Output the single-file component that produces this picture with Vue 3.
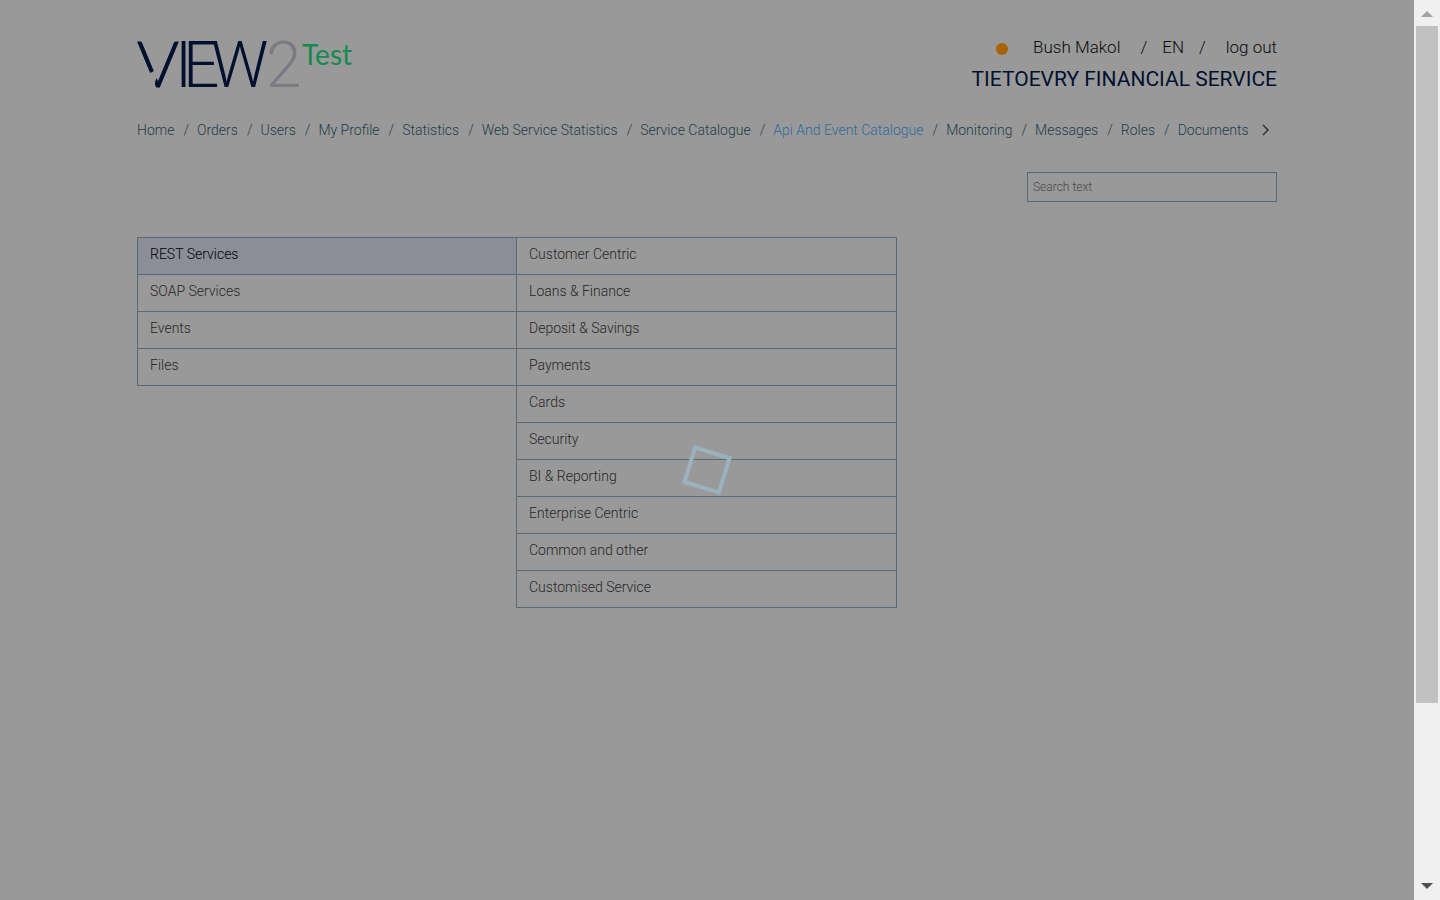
<script setup>
import { ref } from 'vue'

const search = ref('')
const current = 'Api And Event Catalogue'
const links = [
  'Home', 'Orders', 'Users', 'My Profile', 'Statistics', 'Web Service Statistics',
  'Service Catalogue', 'Api And Event Catalogue', 'Monitoring', 'Messages', 'Roles', 'Documents',
]
const kinds = ['REST Services', 'SOAP Services', 'Events', 'Files']
const domains = [
  'Customer Centric', 'Loans & Finance', 'Deposit & Savings', 'Payments', 'Cards', 'Security',
  'BI & Reporting', 'Enterprise Centric', 'Common and other', 'Customised Service',
]
</script>

<template>
  <div class="shell">
    <div class="page">
      <div class="container">
        <header class="header">
          <a class="logo" href="#" aria-label="VIEW2 Test">
            <svg width="220" height="60" viewBox="0 0 220 60">
              <text class="logo-view" x="0 38 46 74" y="51"><tspan class="logo-v">V</tspan>IEW</text>
              <text class="logo-two" x="129" y="51">2</text>
              <text class="logo-test" x="165" y="29">Test</text>
              <path class="logo-cut" d="M9 39 L21 33 L21 39 L18 46 L18 53 L9 53 Z" />
            </svg>
          </a>
          <div class="account">
            <div class="user">
              <span class="status"></span>
              <a class="name" href="#">Bush Makol</a>
              <span class="slash">/</span>
              <a class="lang" href="#">EN</a>
              <span class="slash">/</span>
              <a class="logout" href="#">log out</a>
            </div>
            <div class="company">TIETOEVRY FINANCIAL SERVICE</div>
          </div>
        </header>

        <div class="navbar">
          <nav class="nav">
            <template v-for="(link, i) in links" :key="link">
              <span v-if="i" class="divider">/</span>
              <a href="#" :class="{ active: link === current }">{{ link }}</a>
            </template>
          </nav>
          <button class="next" type="button" aria-label="More">
            <svg width="8" height="12" viewBox="0 0 8 12"><path d="M1 1 L6 6 L1 11" /></svg>
          </button>
        </div>

        <div class="search">
          <input v-model="search" type="text" placeholder="Search text" aria-label="Search text" />
        </div>

        <main class="catalogue">
          <ul class="list">
            <li v-for="(kind, i) in kinds" :key="kind"><a href="#" :class="{ selected: i === 0 }">{{ kind }}</a></li>
          </ul>
          <ul class="list second">
            <li v-for="domain in domains" :key="domain"><a href="#">{{ domain }}</a></li>
          </ul>
        </main>
      </div>
      <div class="spinner" role="status" aria-label="Loading"></div>
    </div>

    <div class="scrollbar" aria-hidden="true">
      <svg width="12" height="6" viewBox="0 0 12 6"><path fill="#a3a3a3" d="M0 6 L6 0 L12 6 Z" /></svg>
      <div class="track"><div class="thumb"></div></div>
      <svg width="12" height="6" viewBox="0 0 12 6"><path fill="#505050" d="M0 0 L12 0 L6 6 Z" /></svg>
    </div>
  </div>
</template>

<style>
body {
  margin: 0;
  background: #999;
}
</style>

<style scoped>
.shell {
  display: flex;
  min-height: 100vh;
  font-family: Roboto, "Liberation Sans", sans-serif;
  font-size: 14px;
  font-weight: 300;
  line-height: 20px;
  color: #262626;
}
.page {
  position: relative;
  flex: 1;
  min-width: 0;
  background: #999;
}
.container {
  max-width: 1140px;
  margin: 0 auto;
}
a {
  color: inherit;
  text-decoration: none;
}
.header {
  display: flex;
  justify-content: space-between;
  padding-top: 36px;
}
.logo svg {
  display: block;
  overflow: visible;
}
.logo .logo-view {
  font-size: 64px;
  fill: #00102e;
}
.logo .logo-v {
  font-family: Lato, sans-serif;
  stroke: #00102e;
  stroke-width: 1;
}
.logo .logo-two {
  font-size: 64px;
  fill: #7b7b85;
}
.logo .logo-test {
  font-family: Lato, sans-serif;
  font-size: 28px;
  font-weight: 400;
  fill: #158a50;
}
.logo-cut {
  fill: #999;
}
.account {
  color: #0a0a0c;
}
.user {
  display: flex;
  align-items: center;
  justify-content: flex-end;
  font-size: 17px;
  line-height: 22px;
}
.status {
  width: 12px;
  height: 12px;
  margin: 3px 25px 0 0;
  border-radius: 50%;
  background: #a86400;
}
.name {
  margin-right: 20px;
}
.lang {
  margin: 0 15px;
}
.logout {
  margin-left: 20px;
}
.company {
  margin-top: 7px;
  font-size: 21px;
  font-weight: 400;
  line-height: 28px;
  text-align: right;
  color: #00102e;
}
.navbar {
  display: flex;
  align-items: center;
  justify-content: space-between;
  margin-top: 24px;
  color: #1f3b4a;
}
.nav {
  display: flex;
  flex: 1;
  overflow: hidden;
  white-space: nowrap;
}
.divider {
  margin: 0 8px 0 9px;
}
.active {
  color: #2d6b99;
}
.next {
  display: flex;
  margin: 0 7px 0 14px;
  padding: 0;
  border: 0;
  background: none;
}
.next path {
  fill: none;
  stroke: #262626;
  stroke-width: 1.3;
}
.search {
  display: flex;
  justify-content: flex-end;
  margin-top: 32px;
}
.search input {
  box-sizing: border-box;
  width: 250px;
  height: 30px;
  padding: 0 5px;
  border: 1px solid #566b77;
  border-radius: 0;
  background: transparent;
  font: inherit;
  font-size: 12px;
}
.search input::placeholder {
  color: #484848;
  opacity: 1;
}
.catalogue {
  display: grid;
  grid-template-columns: repeat(3, 1fr);
  align-items: start;
  margin-top: 35px;
}
.list {
  margin: 0;
  padding: 0;
  list-style: none;
  border: 1px solid #566b77;
}
.second {
  margin-left: -1px;
}
.list li + li {
  border-top: 1px solid #566b77;
}
.list a {
  display: block;
  padding: 6px 12px 10px;
}
.list .selected {
  background: #8b8e98;
  color: #000;
}
.spinner {
  position: absolute;
  top: 450px;
  left: 50%;
  box-sizing: border-box;
  width: 40px;
  height: 40px;
  margin-left: -20px;
  border: 4px solid #9bb1be;
  transform: rotate(17deg);
}
.scrollbar {
  display: flex;
  flex-direction: column;
  align-items: center;
  box-sizing: border-box;
  width: 26px;
  padding: 11px 2px;
  background: #f0f0f0;
}
.track {
  flex: 1;
  width: 22px;
  margin: 9px 0;
}
.thumb {
  height: 79.8%;
  background: #c1c1c1;
}
</style>
